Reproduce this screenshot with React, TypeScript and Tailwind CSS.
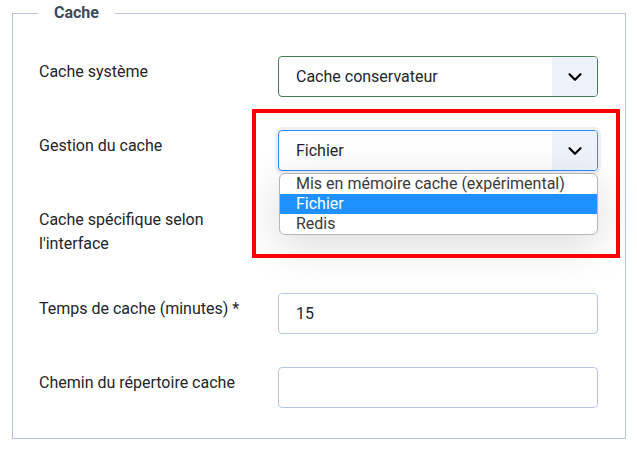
import { ChevronDown } from "lucide-react";

const font = { fontFamily: "Roboto, 'Noto Sans', sans-serif" };

function Label({ children }: { children: React.ReactNode }) {
  return <label className="pt-1 text-base leading-6 text-[#22262a]">{children}</label>;
}

function Select({ value, focused }: { value: string; focused?: boolean }) {
  return (
    <div
      className={`flex h-[41px] w-[320px] items-stretch overflow-hidden rounded-[4px] border bg-white ${
        focused
          ? "border-[#2a8cff] shadow-[0_0_0_3px_rgba(0,0,0,0.06)]"
          : "border-[#457d54]"
      }`}
    >
      <span className="flex flex-1 items-center pl-[17px] text-base text-[#22262a]">{value}</span>
      <span className="flex w-[45px] items-center justify-center bg-[#eef3fb]">
        <ChevronDown className="size-[22px] text-black" strokeWidth={2.4} />
      </span>
    </div>
  );
}

function TextInput({ value }: { value?: string }) {
  return (
    <div className="flex h-[41px] w-[320px] items-center rounded-[4px] border border-[#b8c6e0] bg-white pl-[17px] text-base text-[#22262a]">
      {value}
    </div>
  );
}

const options = ["Mis en mémoire cache (expérimental)", "Fichier", "Redis"];

export default function App() {
  return (
    <div className="relative h-[456px] w-[637px] bg-white pt-[1px]" style={font}>
      <fieldset className="ml-3 w-[614px] border border-[#b7c3d8] pb-[30px] pl-[26px] pr-[27px] pt-[31px]">
        <legend className="-ml-px px-4 text-base font-bold leading-6 text-[#3d4a5c]">Cache</legend>
        <div className="grid grid-cols-[239px_320px] gap-y-[33px]">
          <Label>Cache système</Label>
          <Select value="Cache conservateur" />

          <Label>Gestion du cache</Label>
          <div className="relative">
            <Select value="Fichier" focused />
            <div className="absolute left-[1px] top-[43px] z-10 w-[319px] overflow-hidden rounded-[6px] border border-[#b5b5b5] bg-white shadow-[0_10px_44px_rgba(0,0,0,0.15)]">
              {options.map((o) => (
                <div
                  key={o}
                  className={`h-5 pl-4 text-base leading-5 ${
                    o === "Fichier" ? "bg-[#1e90ff] text-white" : "text-[#3a3a3a]"
                  }`}
                >
                  {o}
                </div>
              ))}
            </div>
          </div>

          <Label>
            Cache spécifique selon
            <br />
            l'interface
          </Label>
          <div className="h-[56px]" />

          <Label>Temps de cache (minutes) *</Label>
          <TextInput value="15" />

          <Label>Chemin du répertoire cache</Label>
          <TextInput />
        </div>
      </fieldset>

      <div className="pointer-events-none absolute left-[252px] top-[109px] z-20 h-[149px] w-[368px] border-4 border-[#ff0000]" />
    </div>
  );
}
